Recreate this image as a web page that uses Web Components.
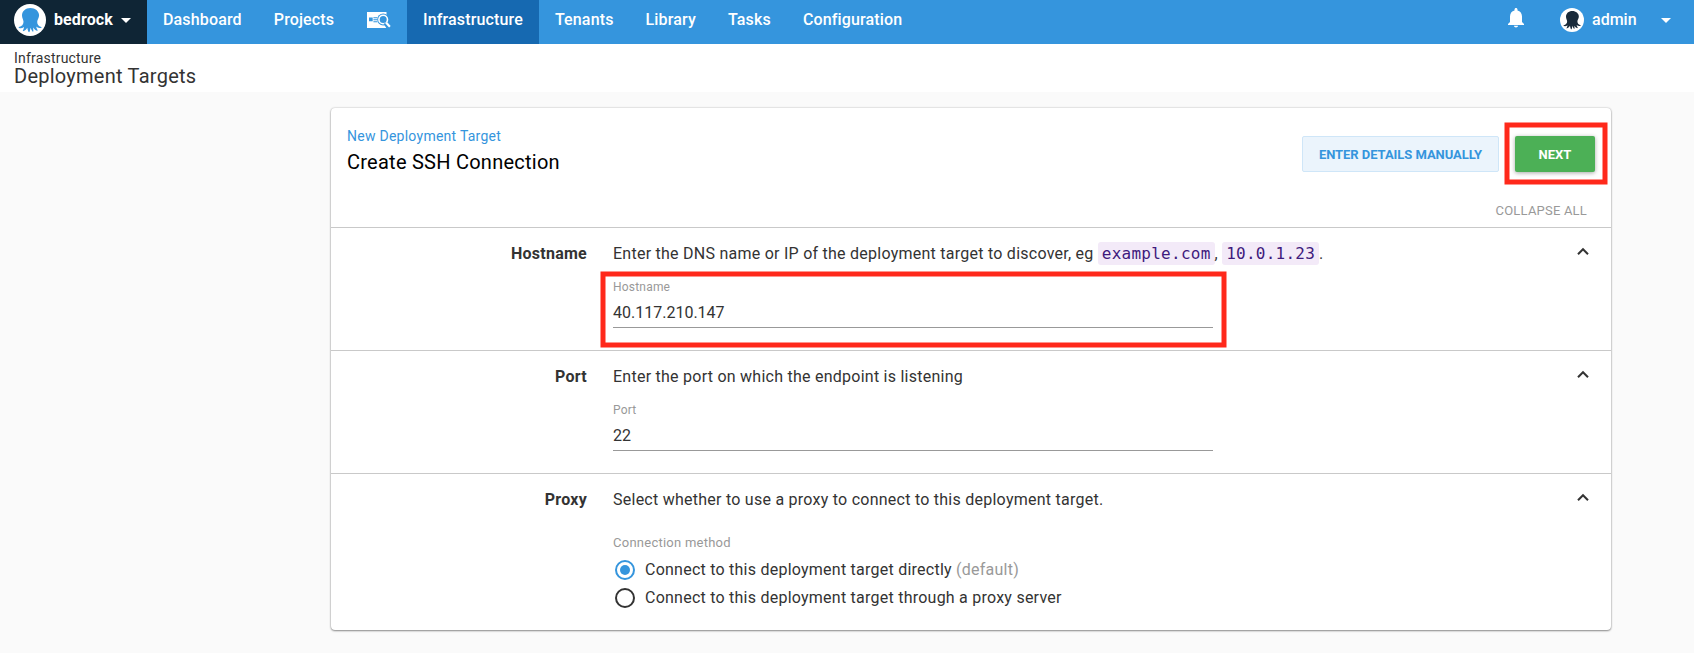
<!DOCTYPE html>
<html lang="en"><head><meta charset="utf-8"><title>Deployment Targets</title>
<style>
html,body{margin:0;height:100%}
body{background:#fafafa;font-family:Roboto,"Liberation Sans",sans-serif;color:#333;overflow:hidden}
</style></head><body>
<deploy-app></deploy-app>
<script>
const define=(name,css,html)=>customElements.define(name,class extends HTMLElement{
  constructor(){super();this.attachShadow({mode:'open'}).innerHTML='<style>*{box-sizing:border-box}'+css+'</style>'+html(this);}
});
define('octo-logo',`:host{display:block;flex:none}svg{display:block;width:100%;height:100%}`,()=>
`<svg viewBox="0 0 32 32"><circle cx="16" cy="16" r="16" fill="#fff"/><path fill="currentColor" d="M16.4 4C11.500 4 8 7.200 8 11.500c0 2.600 1.400 4.200 1.500 6.200.1 2.700-1.700 4.600-4.500 5.400-.6.2-.5.800.1 1 1.600.4 3.400.1 4.900-1-.2 1.500-.6 2.500-1.100 3.300-.3.600 0 1 .7.700 1.700-.7 2.900-1.800 3.700-3.300.2 1.400.5 2.700 1 3.700.4.900 1.100.9 1.400 0 .4-1.200.6-2.400.8-3.700.5 1.300 1 2.500 1.800 3.500.5.700 1.200.4 1.100-.4-.1-1.200-.2-2.300-.3-3.400 1 1.500 2.200 2.700 3.800 3.300.7.2.9-.3.600-.9-.7-1.100-1.100-2.200-1.300-3.300 1.300 1.200 3 1.700 4.900 1.400.6-.1.700-.7.100-1-2.700-1-4.100-2.900-4-5.300.1-2.100 1.900-3.700 1.900-6.400C25 7.200 21.300 4 16.400 4Z"/></svg>`);
define('nav-link',`:host{display:flex;align-items:center;height:44px;padding:0 16px 6px;box-sizing:border-box;flex:none;font-size:16px;font-weight:500;letter-spacing:.15px;color:#fff}:host([active]){background:#1669b1}`,()=>`<slot></slot>`);
define('top-bar',`:host{display:flex;height:44px;background:#3595dd;color:#fff}
.space{display:flex;align-items:center;width:147px;padding:0 0 4px 14px;background:#0f2535;flex:none}
.space octo-logo{width:32px;height:32px;color:#3595dd}
.space b{font-size:16px;font-weight:700;margin:-2px 0 0 8px;width:67px;letter-spacing:.1px}
.caret{width:0;height:0;border:5px solid transparent;border-top-color:#fff;border-bottom:0}
.right{margin-left:auto;display:flex;align-items:center;padding:0 23px 4px 0;font-size:16px}
.right octo-logo{width:24px;height:24px;color:#192b3b;margin:0 8px 0 36px}
.right span{width:69px;font-weight:500;margin-top:-2px}
svg{display:block;margin-top:2px}.bell{margin-top:-4px}`,()=>`
<div class="space"><octo-logo></octo-logo><b>bedrock</b><i class="caret"></i></div>
<nav-link>Dashboard</nav-link><nav-link>Projects</nav-link>
<nav-link><svg width="24.75" height="18" viewBox="0 0 24.750 18"><path fill="#fff" d="M1 1h19.500v16H1z"/><path fill="#3595dd" d="M3 6.600h3.700v3.600H3zM7.400 6.200h4v1h-4zM7.400 8.200h3.600v1H7.400zM7.400 10.200h4v1h-4z"/><circle cx="17.200" cy="8.500" r="6" fill="#3595dd"/><circle cx="17.200" cy="8.500" r="4.300" fill="#3595dd" stroke="#fff" stroke-width="1.600"/><path d="M19 12l3.500 5" stroke="#3595dd" stroke-width="3.500"/><path d="M20 11.600l3.900 4.200" stroke="#fff" stroke-width="2.200"/></svg></nav-link>
<nav-link active>Infrastructure</nav-link><nav-link>Tenants</nav-link><nav-link>Library</nav-link><nav-link>Tasks</nav-link><nav-link>Configuration</nav-link>
<div class="right"><svg class="bell" width="16" height="20" viewBox="0 0 16 20" fill="#fff"><path d="M8 19.500c1.100 0 2-.7 2-1.700H6c0 1 .9 1.700 2 1.700ZM14 14V8.500c0-3-1.700-5.400-4.500-6V1.500C9.500.7 8.800 0 8 0S6.500.7 6.500 1.500v1C3.700 3.100 2 5.500 2 8.500V14l-2 2v1h16v-1z"/></svg><octo-logo></octo-logo><span>admin</span><i class="caret"></i></div>`);
define('page-title',`:host{display:block;height:48px;padding:6px 14px 0;box-sizing:border-box;background:#fff;color:#333}
.a{font-size:14px;line-height:16px;letter-spacing:.2px}.b{font-size:20px;line-height:22px;letter-spacing:.25px;margin-top:-1px}`,()=>`<div class="a">Infrastructure</div><div class="b">Deployment Targets</div>`);
define('hi-box',`:host{position:absolute;pointer-events:none}svg{display:block;width:100%;height:100%;overflow:visible}rect{x:3px;y:3px;width:calc(100% - 6px);height:calc(100% - 6px);fill:none;stroke:#ff291b;stroke-width:5px}`,()=>'<svg><rect/></svg>');
define('action-button',`:host{display:flex;align-items:center;justify-content:center;height:36px;box-sizing:border-box;border-radius:2px;font-size:13px;font-weight:700}
:host([kind=soft]){width:197px;background:#ebf4fc;border:1px solid #cfe6f8;color:#3595dd;letter-spacing:-.05px;padding-top:1px}
:host([kind=primary]){width:80px;background:#4cb056;color:#fff;box-shadow:0 1px 4px rgba(0,0,0,.35)}`,()=>`<slot></slot>`);
define('card-head',`:host{display:flex;justify-content:space-between;height:119px;box-sizing:border-box;padding:20px 16px 0}
.k{font-size:14px;line-height:17px;color:#3595dd;letter-spacing:.26px}.t{font-size:20px;line-height:24px;color:#000;margin-top:5px;letter-spacing:.25px}
.r{display:flex;flex-direction:column;align-items:flex-end}.btns{display:flex;gap:16px;padding-top:8px}
.pos{position:relative}hi-box{left:-11px;top:-14px;width:104px;height:63px}
.c{font-size:13px;color:#999;line-height:16px;letter-spacing:.2px;margin:31px 8px 0 0}`,()=>`
<div><div class="k">New Deployment Target</div><div class="t">Create SSH Connection</div></div>
<div class="r"><div class="btns"><action-button kind="soft">ENTER DETAILS MANUALLY</action-button><div class="pos"><action-button kind="primary">NEXT</action-button><hi-box></hi-box></div></div><div class="c">COLLAPSE ALL</div></div>`);
define('form-section',`:host{display:grid;grid-template-columns:256px 1fr 36px;column-gap:26px;height:123px;box-sizing:border-box;border-top:1px solid #c9c9c9;padding:16px 2px 0 0;font-size:16px}
:host([last]){height:157px}
.l{font-weight:700;text-align:right;line-height:20px;letter-spacing:.25px}.d{height:20px;line-height:20px;letter-spacing:.25px;white-space:nowrap}
svg{display:block}`,e=>`<div class="l">${e.getAttribute('label')}</div><div><div class="d"><slot name="desc"></slot></div><slot></slot></div><svg width="24" height="16" viewBox="0 0 24 16" fill="none" stroke="#333" stroke-width="2"><path d="M5 10.200 10 5.200 15 10.200"/></svg>`);
define('code-tag',`:host{display:inline-block;height:23px;line-height:23px;vertical-align:top;margin-top:-2px;padding:0 4px;background:#f3eaf8;border-radius:3px;color:#3f1a7d;font-family:"DejaVu Sans Mono",monospace;font-size:16px;letter-spacing:.25px}`,()=>`<slot></slot>`);
define('text-field',`:host{display:block;position:relative;width:600px;margin-top:2px;border-bottom:1px solid #999;height:62px;box-sizing:border-box}
.n{font-size:12px;line-height:14px;color:#999;padding-top:14px;letter-spacing:.2px}.v{font-size:16px;line-height:20px;margin-top:9px}
hi-box{left:-13px;top:5px;width:627px;height:77px}`,e=>`<div class="n">${e.getAttribute('label')}</div><div class="v"><slot></slot></div>${e.hasAttribute('marked')?'<hi-box></hi-box>':''}`);
define('radio-row',`:host{display:flex;align-items:center;height:28px;padding-left:2px;letter-spacing:.24px;white-space:pre}
i{width:20px;height:20px;border:2px solid #333;border-radius:50%;margin:2px 10px 0 0;display:grid;place-items:center}
:host([on]) i{border-color:#3595dd}:host([on]) i::after{content:"";width:10px;height:10px;border-radius:50%;background:#3595dd}`,()=>`<i></i><span><slot></slot></span>`);
define('deploy-app',`:host{display:block}
.card{width:1280px;margin:16px 0 0 331px;background:#fff;border-radius:4px;box-shadow:0 1px 2px rgba(0,0,0,.4),0 0 2px rgba(0,0,0,.25)}
.m{font-size:13px;line-height:16px;color:#999;letter-spacing:.25px;margin:25px 0 4px}.g{color:#999}`,()=>`
<top-bar></top-bar><page-title></page-title>
<div class="card"><card-head></card-head>
<form-section label="Hostname"><span slot="desc">Enter the DNS name or IP of the deployment target to discover, eg <code-tag>example.com</code-tag>, <code-tag>10.0.1.23</code-tag>.</span><text-field label="Hostname" marked>40.117.210.147</text-field></form-section>
<form-section label="Port"><span slot="desc">Enter the port on which the endpoint is listening</span><text-field label="Port">22</text-field></form-section>
<form-section label="Proxy" last><span slot="desc">Select whether to use a proxy to connect to this deployment target.</span><div class="m">Connection method</div><radio-row on>Connect to this deployment target directly <span class="g">(default)</span></radio-row><radio-row>Connect to this deployment target through a proxy server</radio-row></form-section>
</div>`);
</script>
</body></html>
